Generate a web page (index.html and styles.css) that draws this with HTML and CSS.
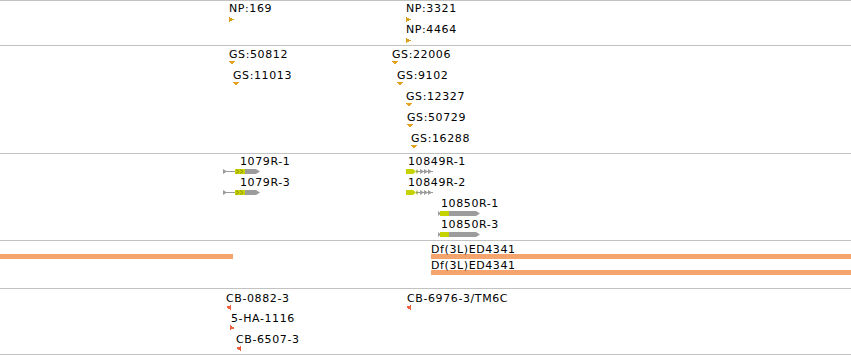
FILE: index.html
```html
<!DOCTYPE html>
<html>
<head>
<title>Tracks</title>
<link rel="stylesheet" href="styles.css">
</head>
<body>

<div class="view">

  <!-- NP insertions -->
  <div class="track track-np">
    <div class="feature np" style="left:229px; top:1px">
      <div class="label">NP:169</div>
      <svg class="glyph" width="5" height="5"><polygon points="0,0 5,2.5 0,5" /></svg>
    </div>
    <div class="feature np" style="left:406px; top:1px">
      <div class="label">NP:3321</div>
      <svg class="glyph" width="5" height="5"><polygon points="0,0 5,2.5 0,5" /></svg>
    </div>
    <div class="feature np" style="left:406px; top:22px">
      <div class="label">NP:4464</div>
      <svg class="glyph" width="5" height="5"><polygon points="0,0 5,2.5 0,5" /></svg>
    </div>
  </div>

  <!-- GS insertions -->
  <div class="track track-gs">
    <div class="feature gs" style="left:229px; top:2px">
      <div class="label">GS:50812</div>
      <svg class="glyph" width="6" height="4"><polygon points="0,0 6,0 3,4" /></svg>
    </div>
    <div class="feature gs" style="left:233px; top:23px">
      <div class="label">GS:11013</div>
      <svg class="glyph" width="6" height="4"><polygon points="0,0 6,0 3,4" /></svg>
    </div>
    <div class="feature gs" style="left:392px; top:2px">
      <div class="label">GS:22006</div>
      <svg class="glyph" width="6" height="4"><polygon points="0,0 6,0 3,4" /></svg>
    </div>
    <div class="feature gs" style="left:397px; top:23px">
      <div class="label">GS:9102</div>
      <svg class="glyph" width="6" height="4"><polygon points="0,0 6,0 3,4" /></svg>
    </div>
    <div class="feature gs" style="left:406px; top:44px">
      <div class="label">GS:12327</div>
      <svg class="glyph" width="6" height="4"><polygon points="0,0 6,0 3,4" /></svg>
    </div>
    <div class="feature gs" style="left:407px; top:65px">
      <div class="label">GS:50729</div>
      <svg class="glyph" width="6" height="4"><polygon points="0,0 6,0 3,4" /></svg>
    </div>
    <div class="feature gs" style="left:411px; top:86px">
      <div class="label">GS:16288</div>
      <svg class="glyph" width="6" height="4"><polygon points="0,0 6,0 3,4" /></svg>
    </div>
  </div>

  <!-- transcripts -->
  <div class="track track-genes">
    <div class="feature gene" style="left:223px; top:1px">
      <div class="label" style="margin-left:17px">1079R-1</div>
      <svg class="glyph" width="38" height="5">
        <rect class="intron" x="0" y="2" width="12" height="1" />
        <polygon class="utr" points="0,0 4,2.5 0,5" />
        <rect class="cds" x="12" y="0" width="10" height="5" />
        <polyline class="tick" points="13,0.5 16,2.5 13,4.5" />
        <polyline class="tick" points="17,0.5 20,2.5 17,4.5" />
        <polygon class="utr" points="22,0 33,0 37,2.5 33,5 22,5" />
      </svg>
    </div>
    <div class="feature gene" style="left:223px; top:22px">
      <div class="label" style="margin-left:17px">1079R-3</div>
      <svg class="glyph" width="38" height="5">
        <rect class="intron" x="0" y="2" width="12" height="1" />
        <polygon class="utr" points="0,0 4,2.5 0,5" />
        <rect class="cds" x="12" y="0" width="10" height="5" />
        <polyline class="tick" points="13,0.5 16,2.5 13,4.5" />
        <polyline class="tick" points="17,0.5 20,2.5 17,4.5" />
        <polygon class="utr" points="22,0 33,0 37,2.5 33,5 22,5" />
      </svg>
    </div>
    <div class="feature gene" style="left:406px; top:1px">
      <div class="label" style="margin-left:2px">10849R-1</div>
      <svg class="glyph" width="28" height="5">
        <polygon class="cds" points="0,0 7,0 10,2.5 7,5 0,5" />
        <rect class="intron" x="10" y="2" width="17" height="1" />
        <polyline class="tick" points="11,0.5 11,4.5" />
        <polygon class="utr" points="14,0 18,2.5 14,5" />
        <polygon class="utr" points="18,0 22,2.5 18,5" />
        <polygon class="utr" points="22,0 26,2.5 22,5" />
      </svg>
    </div>
    <div class="feature gene" style="left:406px; top:22px">
      <div class="label" style="margin-left:2px">10849R-2</div>
      <svg class="glyph" width="28" height="5">
        <polygon class="cds" points="0,0 7,0 10,2.5 7,5 0,5" />
        <rect class="intron" x="10" y="2" width="17" height="1" />
        <polyline class="tick" points="11,0.5 11,4.5" />
        <polygon class="utr" points="14,0 18,2.5 14,5" />
        <polygon class="utr" points="18,0 22,2.5 18,5" />
        <polygon class="utr" points="22,0 26,2.5 22,5" />
      </svg>
    </div>
    <div class="feature gene" style="left:438px; top:43px">
      <div class="label" style="margin-left:3px">10850R-1</div>
      <svg class="glyph" width="43" height="5">
        <polygon class="utr" points="0,0 3,2.5 0,5" />
        <rect class="cds" x="2" y="0" width="9" height="5" />
        <polygon class="utr" points="11,0 38,0 42,2.5 38,5 11,5" />
      </svg>
    </div>
    <div class="feature gene" style="left:438px; top:64px">
      <div class="label" style="margin-left:3px">10850R-3</div>
      <svg class="glyph" width="43" height="5">
        <polygon class="utr" points="0,0 3,2.5 0,5" />
        <rect class="cds" x="2" y="0" width="9" height="5" />
        <polygon class="utr" points="11,0 38,0 42,2.5 38,5 11,5" />
      </svg>
    </div>
  </div>

  <!-- deficiencies -->
  <div class="track track-df">
    <div class="feature df" style="left:0; top:13px">
      <div class="bar bar-only" style="width:233px"></div>
    </div>
    <div class="feature df" style="left:431px; top:2px">
      <div class="label">Df(3L)ED4341</div>
      <div class="bar" style="width:420px"></div>
    </div>
    <div class="feature df" style="left:431px; top:18px">
      <div class="label">Df(3L)ED4341</div>
      <div class="bar" style="width:420px"></div>
    </div>
  </div>

  <!-- stocks -->
  <div class="track track-cb">
    <div class="feature cb" style="left:226px; top:3px">
      <div class="label">CB-0882-3</div>
      <svg class="glyph" width="5" height="5"><polygon points="0,2 5,0 5,5" /></svg>
    </div>
    <div class="feature cb" style="left:230px; top:23px">
      <div class="label" style="margin-left:1px">5-HA-1116</div>
      <svg class="glyph" width="5" height="5"><polygon points="0,0 5,3 0,5" /></svg>
    </div>
    <div class="feature cb" style="left:236px; top:44px">
      <div class="label">CB-6507-3</div>
      <svg class="glyph" width="5" height="5"><polygon points="0,2 5,0 5,5" /></svg>
    </div>
    <div class="feature cb" style="left:406px; top:3px">
      <div class="label" style="margin-left:1px">CB-6976-3/TM6C</div>
      <svg class="glyph" width="5" height="5"><polygon points="0,2 5,0 5,5" /></svg>
    </div>
  </div>

</div>

</body>
</html>
```

FILE: styles.css
```css
/* styles.css */

body {
  margin: 0;
  background: #fff;
  font-family: "DejaVu Sans", "Liberation Sans", sans-serif;
}

.view {
  width: 851px;
  border-top: 1px solid #c2c2c2;
  overflow: hidden;
}

.track {
  position: relative;
  border-bottom: 1px solid #c2c2c2;
}
.track-np { height: 44px; }
.track-gs { height: 107px; }
.track-genes { height: 86px; }
.track-df { height: 47px; }
.track-cb { height: 65px; }

.feature {
  position: absolute;
}

.label {
  font-size: 11px;
  line-height: 13px;
  letter-spacing: 0.6px;
  white-space: nowrap;
  color: #000;
}

.glyph {
  display: block;
}

.np .glyph, .gs .glyph, .cb .glyph {
  shape-rendering: crispEdges;
}
.np .glyph { margin-top: 2px; fill: #d9a01c; }
.gs .glyph { margin-top: 0; fill: #e3a21f; }
.cb .glyph { margin-top: 0; fill: #f2603e; }
.gene .glyph { margin-top: 1px; }

.gene .intron { fill: #9a9a9a; }
.gene .utr { fill: #9c9c9c; }
.gene .cds { fill: #c6d300; }
.gene .tick {
  fill: none;
  stroke: #8e9a00;
  stroke-width: 1;
}

.df .bar {
  height: 5px;
  margin-top: -2px;
  background: #f5a46e;
}
.df .bar-only {
  margin-top: 0;
}
```
